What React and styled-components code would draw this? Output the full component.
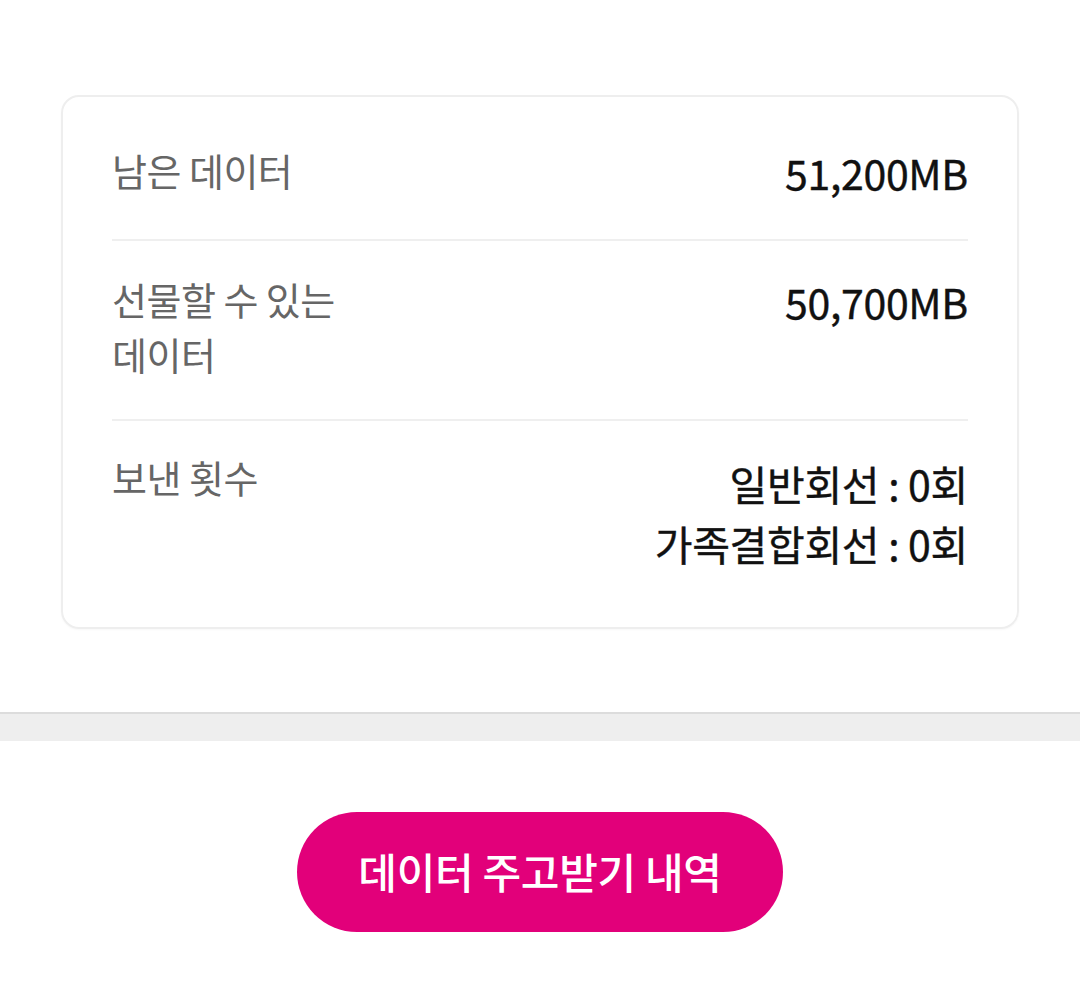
import React from "react";
import styled, { createGlobalStyle } from "styled-components";

const Global = createGlobalStyle`
  html, body { margin: 0; padding: 0; background: #fff; }
  body { font-family: "Noto Sans CJK KR", "Noto Sans", sans-serif; -webkit-font-smoothing: antialiased; }
`;

const Page = styled.div`
  width: 1080px;
  height: 993px;
  display: flex;
  flex-direction: column;
  background: #fff;
  overflow: hidden;
`;

const Section = styled.section`
  padding: 95px 61px 83px 61px;
`;

const Card = styled.div`
  border: 2px solid #eeeeee;
  border-radius: 18px;
  padding: 0 49px;
  box-shadow: 0 1px 2px rgba(0,0,0,0.03);
`;

const Row = styled.div`
  display: flex;
  justify-content: space-between;
  align-items: flex-start;
  padding: ${p => p.$pad};
  border-bottom: ${p => (p.$last ? "none" : "2px solid #efefef")};
`;

const Label = styled.div`
  font-size: 38px;
  line-height: 55px;
  color: #666666;
  letter-spacing: -0.5px;
`;

const Value = styled.div`
  margin-top: ${p => p.$offset || "0px"};
  font-size: 41px;
  line-height: 60px;
  font-weight: 400;
  color: #111111;
  text-align: right;
  letter-spacing: -0.3px;
  -webkit-text-stroke: 0.4px #111111;
`;

const Band = styled.div`
  height: 27px;
  background: #eeeeee;
  border-top: 2px solid #dcdcdc;
`;

const ButtonArea = styled.div`
  display: flex;
  justify-content: center;
  padding-top: 71px;
`;

const PinkButton = styled.button`
  width: 486px;
  height: 120px;
  border: none;
  border-radius: 60px;
  background: #e2007a;
  color: #ffffff;
  font-family: "Noto Sans CJK KR", "Noto Sans", sans-serif;
  font-size: 42px;
  font-weight: 500;
  letter-spacing: -0.3px;
  display: flex;
  align-items: center;
  justify-content: center;
  padding: 0 0 4px 0;
`;

export default function App() {
  return (
    <>
      <Global />
      <Page>
        <Section>
          <Card>
            <Row $pad="45px 0 37px 0">
              <Label>남은 데이터</Label>
              <Value>51,200MB</Value>
            </Row>
            <Row $pad="30px 0 38px 0">
              <Label>선물할 수 있는<br />데이터</Label>
              <Value>50,700MB</Value>
            </Row>
            <Row $pad="28px 0 54px 0" $last>
              <Label>보낸 횟수</Label>
              <Value $offset="4px">일반회선 : 0회<br />가족결합회선 : 0회</Value>
            </Row>
          </Card>
        </Section>
        <Band />
        <ButtonArea>
          <PinkButton>데이터 주고받기 내역</PinkButton>
        </ButtonArea>
      </Page>
    </>
  );
}
